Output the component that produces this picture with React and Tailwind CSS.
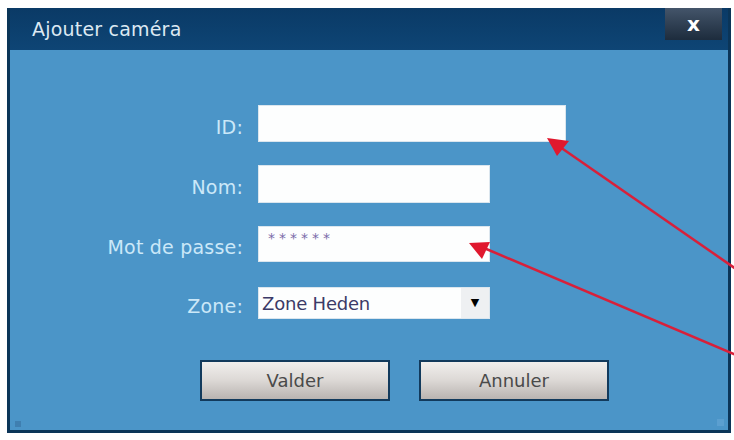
import React from 'react'

const font = { fontFamily: '"DejaVu Sans", Verdana, sans-serif' }

function Field({ label, children }) {
  return (
    <>
      <label className="text-right text-[19px] text-[#cbe8f8] pr-[15px] self-center pt-[7px] tracking-[0.2px]">{label}</label>
      <div>{children}</div>
    </>
  )
}

export default function App() {
  return (
    <div className="relative w-[734px] h-[440px] bg-white overflow-hidden" style={font}>
      <div className="absolute left-[7px] top-[8px] w-[724px] h-[425px] flex flex-col border-x-[3px] border-b-[3px] border-[#0b3558] bg-[#4b95c8]">
        {/* Barre de titre */}
        <div className="h-[42px] flex items-center justify-between bg-gradient-to-b from-[#0a3a66] to-[#0e4575] pl-[22px] pr-[6px]">
          <span className="text-[19px] text-[#dce9f3] tracking-[0.2px]">Ajouter caméra</span>
          <button className="w-[57px] h-[32px] -mt-[10px] flex items-center justify-center bg-gradient-to-b from-[#44556a] to-[#1d2c3d] text-white text-[20px] font-bold">
            x
          </button>
        </div>

        {/* Formulaire */}
        <div className="flex-1 relative pt-[55px]">
          <div className="grid grid-cols-[248px_auto] gap-y-[23px]">
            <Field label="ID:">
              <div className="w-[308px] h-[37px] bg-[#fdfefe] border border-[#dbe6ee]" />
            </Field>
            <Field label="Nom:">
              <div className="w-[232px] h-[38px] bg-[#fdfefe] border border-[#dbe6ee]" />
            </Field>
            <Field label="Mot de passe:">
              <div className="w-[232px] h-[36px] bg-[#fdfefe] border border-[#dbe6ee] pl-[9px] pt-[3px] text-[14px] leading-[16px] text-[#7a6aa9] tracking-[4px]">
                ******
              </div>
            </Field>
            <Field label="Zone:">
              <div className="w-[232px] h-[32px] bg-[#fdfefe] border border-[#dbe6ee] flex items-center mt-[2px]">
                <span className="flex-1 pl-[3px] text-[18px] text-[#3b3a67] tracking-[-0.2px]">Zone Heden</span>
                <span className="w-[28px] h-full flex items-center justify-center bg-[#eef0f2] text-[11px] text-black">▼</span>
              </div>
            </Field>
          </div>

          <div className="flex gap-[29px] pl-[190px] mt-[39px]">
            <button className="w-[190px] h-[41px] border-2 border-[#123a5c] bg-gradient-to-b from-[#f1efed] via-[#dcd8d5] to-[#b9b4b1] text-[18px] text-[#4a4a4a]">
              Valder
            </button>
            <button className="w-[190px] h-[41px] border-2 border-[#123a5c] bg-gradient-to-b from-[#f1efed] via-[#dcd8d5] to-[#b9b4b1] text-[18px] text-[#4a4a4a]">
              Annuler
            </button>
          </div>

          <span className="absolute left-[5px] bottom-[3px] w-[6px] h-[6px] bg-[#3f7fb0]" />
          <span className="absolute right-[4px] bottom-[4px] w-[7px] h-[7px] bg-[#5b9fd0]" />
        </div>
      </div>

      {/* Flèches rouges */}
      <svg className="absolute inset-0 pointer-events-none" width="734" height="440" viewBox="0 0 734 440">
        <g stroke="#d8203a" strokeWidth="2.5" fill="none">
          <path d="M736 269 L560 147" />
          <path d="M736 355 L484 248" />
        </g>
        <g fill="#e0182e">
          <polygon points="547,138 569,141 557,156" />
          <polygon points="469,243 490,242 482,259" />
        </g>
      </svg>
    </div>
  )
}
